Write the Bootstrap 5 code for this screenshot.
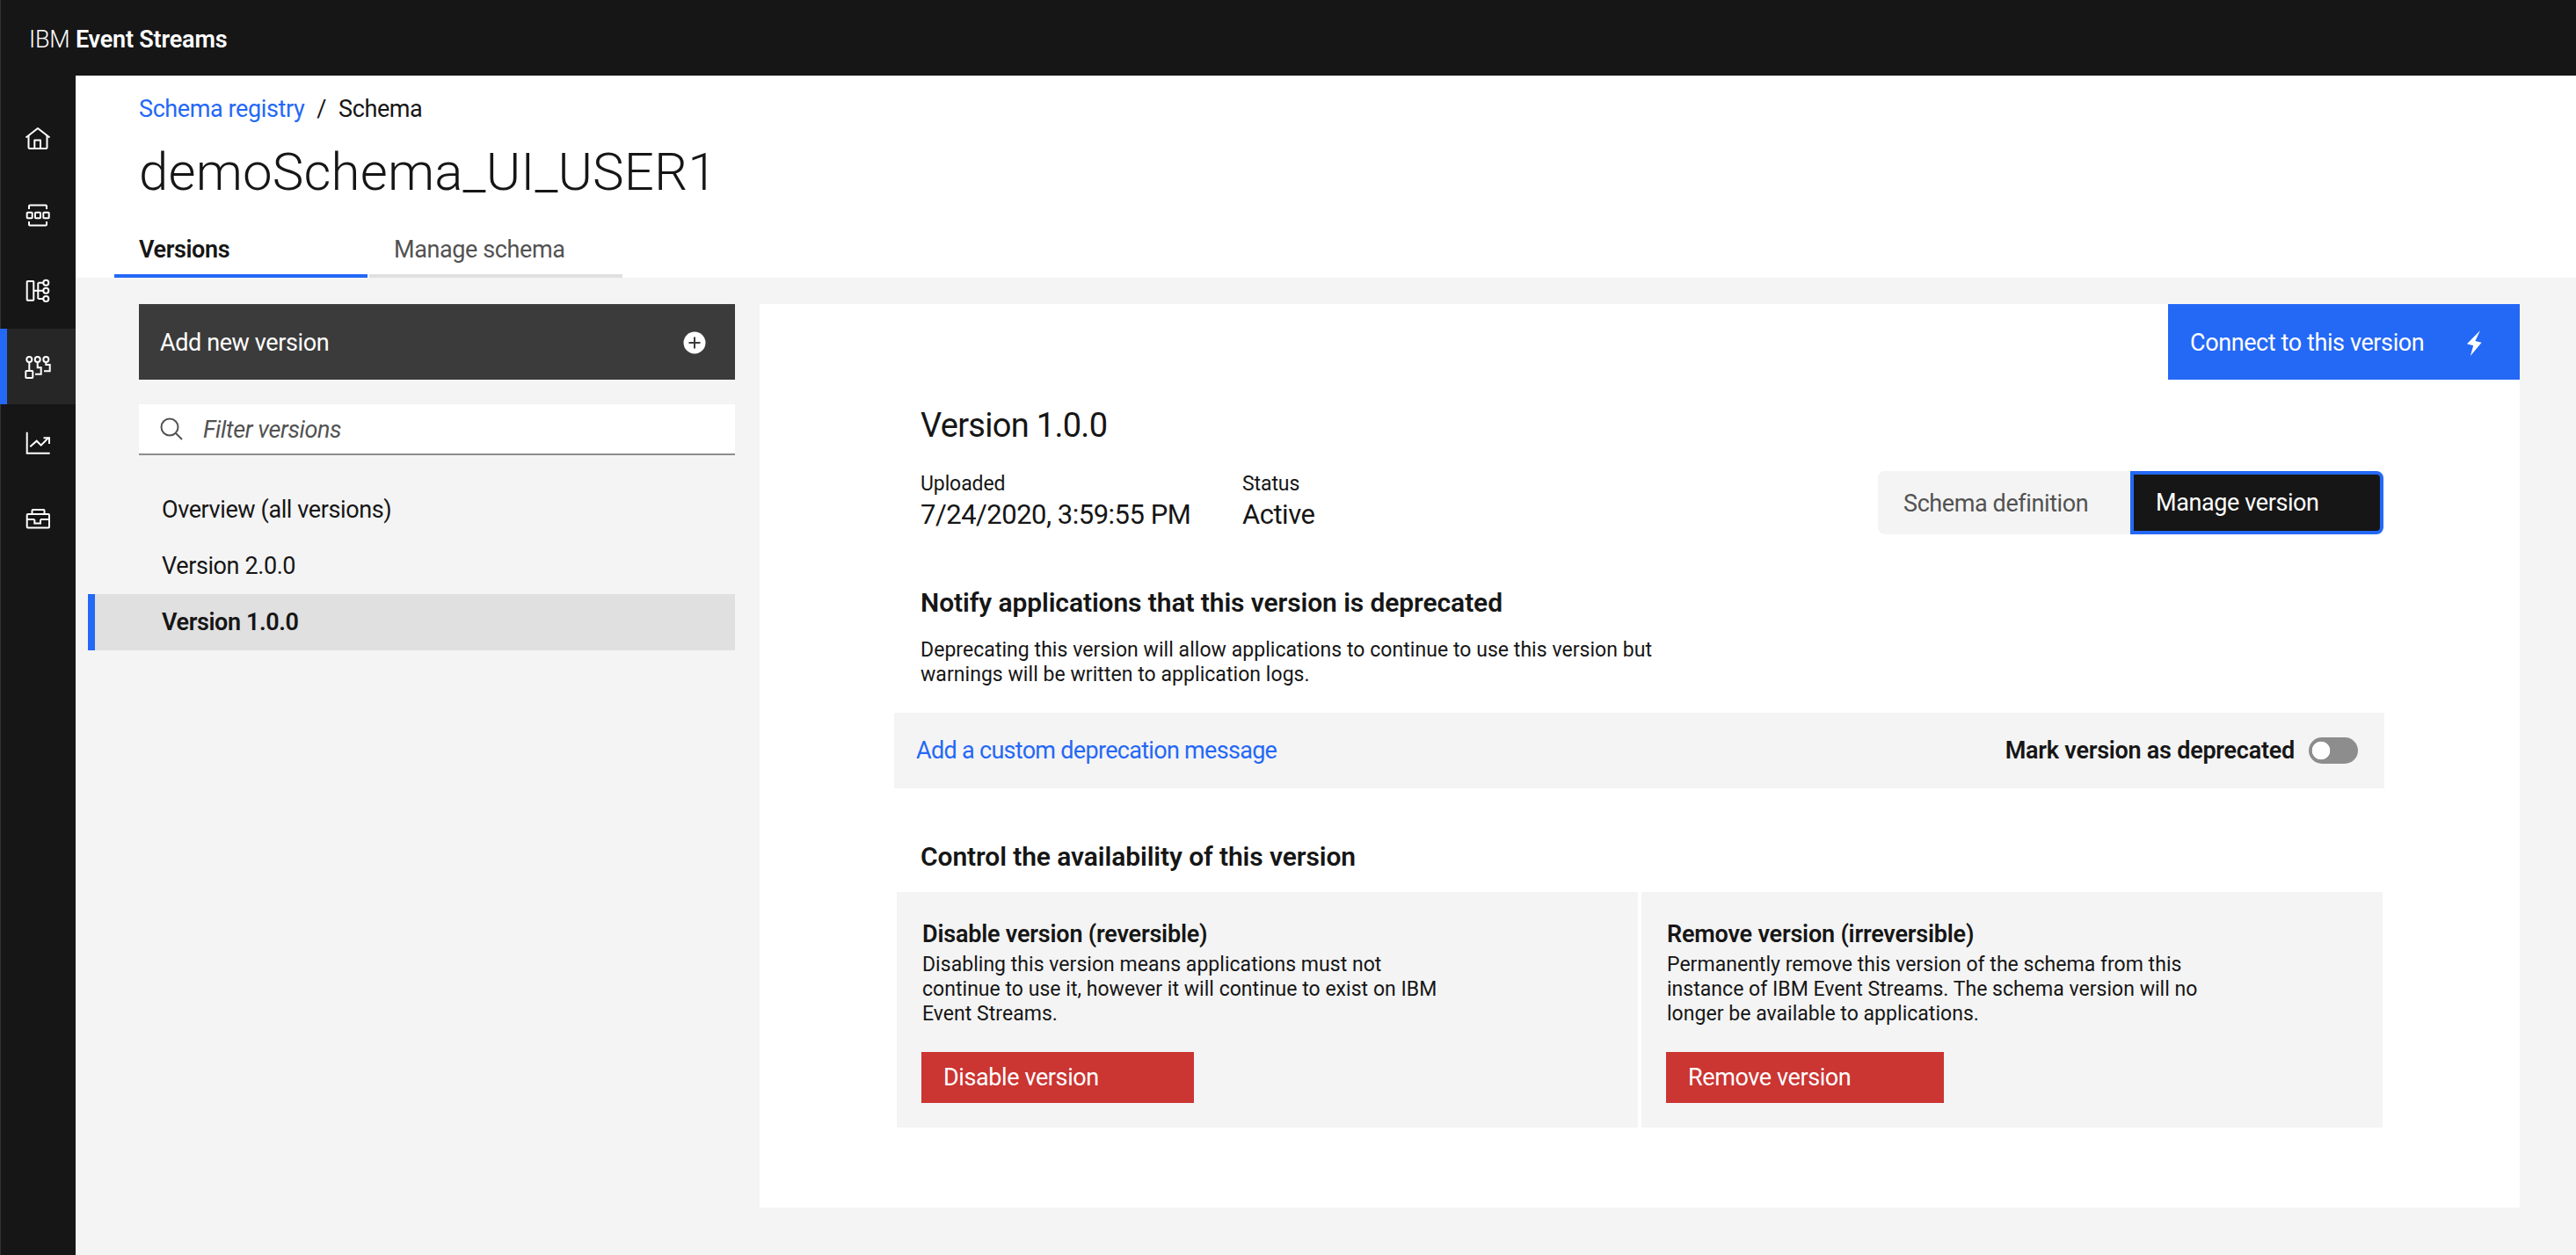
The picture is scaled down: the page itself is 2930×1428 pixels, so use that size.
<!DOCTYPE html>
<html lang="en">
<head>
<meta charset="utf-8">
<title>Schema</title>
<link href="https://cdn.jsdelivr.net/npm/bootstrap@5.3.0/dist/css/bootstrap.min.css" rel="stylesheet">
<style>
html,body{height:100%}
body{font-family:Roboto,"Liberation Sans",sans-serif;font-size:27px;line-height:36px;letter-spacing:-.4px;color:#161616;background:#f4f4f4;overflow:hidden}
.es-top{height:86px;padding:4px 0 0 33px;background:#161616;align-items:center;justify-content:flex-start;border-left:1px solid #333}
.es-brand{color:#fff;font-size:27px;line-height:36px;letter-spacing:-.2px;padding:0;margin:0;margin-left:-1px;font-weight:300}
.es-brand b{font-weight:600}
.es-shell{height:1342px}
.es-rail{width:86px;flex:none;background:#161616;padding-top:30px;border-left:1px solid #333}
.es-rail .nav-link{height:86px;padding:0;margin-left:-1px;display:flex;align-items:center;justify-content:center;border-left:0}
.es-rail .nav-link.active{background:#262626;box-shadow:inset 8px 0 0 #2468f6}
.es-rail svg{width:32px;height:32px;fill:none;stroke:#fff;stroke-width:2}
.es-main{min-width:0}
.es-head{height:230px;background:#fff;padding:20px 0 0 72px;position:relative}
.es-crumb{margin:0;--bs-breadcrumb-divider-color:#161616;--bs-breadcrumb-item-padding-x:14px;--bs-breadcrumb-margin-bottom:0}
.es-crumb a{color:#2468f6;text-decoration:none}
.es-crumb .breadcrumb-item.active{color:#161616}
.es-crumb .breadcrumb-item+.breadcrumb-item::before{color:#161616}
.es-title{font-size:60px;line-height:72px;font-weight:300;letter-spacing:.15px;margin:18px 0 0}
.es-tabs{margin:20px 0 0 -28px;border:0;gap:2px;flex-wrap:nowrap}
.es-tabs .nav-link{width:288px;height:64px;padding:14px 0 10px 28px;border:0;border-bottom:4px solid #e0e0e0;border-radius:0;margin:0;color:#525252;background:none}
.es-tabs .nav-link.active{color:#161616;font-weight:600;border-bottom-color:#2468f6;background:none}
.es-body{padding:30px 64px 0 72px;gap:28px}
.es-left{width:678px;flex:none}
.es-add{height:86px;width:100%;background:#3b3b3b;color:#fff;border:0;border-radius:0;padding:2px 33px 0 24px;font-size:27px;line-height:36px;letter-spacing:-.4px;display:flex;align-items:center;justify-content:space-between}
.es-add svg{width:26px;height:26px}
.es-search{height:58px;margin-top:28px;background:#fff;border-bottom:2px solid #8d8d8d;align-items:center;padding-left:24px}
.es-search svg{width:26px;height:26px;flex:none;fill:none;stroke:#525252;stroke-width:2}
.es-search input{border:0;border-radius:0;padding:2px 0 0;margin-left:23px;background:none;font-size:27px;line-height:36px;letter-spacing:-.4px;font-style:italic;box-shadow:none}
.es-search input::placeholder{color:#525252;opacity:1}
.es-vlist{margin:30px 0 0 -58px;--bs-list-group-bg:transparent;--bs-list-group-border-width:0;border-radius:0}
.es-vlist .list-group-item{height:64px;padding:14px 0 0 84px;background:none;color:#161616;border:0;border-radius:0}
.es-vlist .list-group-item.active{background:#e0e0e0;color:#161616;font-weight:600;padding-left:76px;border-left:8px solid #2468f6;margin:0}
.es-panel{width:2002px;height:1028px;flex:none;background:#fff;padding:0 154px 0 153px;position:relative}
.es-connectrow{margin-right:-154px}
.es-connect{width:400px;height:86px;background:#2468f6;color:#fff;border:0;border-radius:0;padding:2px 43px 0 25px;font-size:27px;line-height:36px;letter-spacing:-.4px;display:flex;align-items:center;justify-content:space-between}
.es-connect svg{width:17px;height:29px;fill:#fff;flex:none}
.es-inset{padding-left:30px}
.es-ver{font-size:38px;line-height:48px;font-weight:400;margin:28px 0 0;letter-spacing:-.7px}
.es-meta{margin-top:27px;height:73px}
.es-lbl{font-size:23px;line-height:32px;letter-spacing:-.1px}
.es-val{font-size:31px;line-height:40px;letter-spacing:-.5px;margin-top:-1px}
.es-col1{width:366px}
.es-seg{width:576px;height:72px;margin-top:1px;flex:none;border-radius:8px}
.es-seg .btn{width:288px;height:72px;flex:none;padding:2px 0 0 29px;text-align:left;font-size:27px;line-height:36px;letter-spacing:-.4px;background:#f4f4f4;color:#525252;border:0;border-radius:8px 0 0 8px}
.es-seg .btn.active{background:#161616;color:#fff;border:4px solid #2468f6;border-radius:0 8px 8px 0;padding:0 0 0 25px;margin:0}
.es-h{font-size:30px;line-height:40px;font-weight:600;letter-spacing:-.1px;margin:0}
.es-hn{margin-top:58px}
.es-pp{font-size:23px;line-height:28px;letter-spacing:.05px;margin:20px 0 0}
.es-bar{height:86px;margin-top:29px;background:#f4f4f4;padding:0 30px 0 25px;align-items:center;justify-content:space-between}
.es-bar a{color:#2468f6;text-decoration:none;letter-spacing:-.7px}
.es-sw{padding:0;margin:0;min-height:0;gap:16px;align-items:center}
.es-sw .form-check-label{font-weight:600;letter-spacing:-.25px}
.es-sw .form-check-input{width:56px;height:30px;margin:0;float:none;border:0;border-radius:15px;background-color:#8d8d8d;background-image:radial-gradient(circle at 14px 15px,#fff 10px,transparent 10.6px);background-position:0 0;background-size:auto}
.es-hc{margin-top:58px}
.es-cards{margin:20px 2px 0 3px;gap:4px}
.es-card{flex:1 1 0;height:268px;background:#f4f4f4;border:0;border-radius:0;padding:30px 28px 28px}
.es-card h3{font-size:27px;line-height:36px;font-weight:600;letter-spacing:-.2px;margin:0 0 0 1px}
.es-card p{font-size:23px;line-height:28px;letter-spacing:.03px;margin:3px 0 0 1px}
.es-danger{height:58px;background:#cb3532;color:#fff;border:0;border-radius:0;text-align:left;padding:0 0 0 25px;font-size:27px;line-height:36px;letter-spacing:-.4px;margin-top:29px}
.es-w1{width:310px}
.es-w2{width:316px}
</style>
</head>
<body>
<nav class="navbar es-top"><span class="navbar-brand es-brand">IBM <b>Event Streams</b></span></nav>
<div class="d-flex es-shell">
  <aside class="nav flex-column flex-nowrap es-rail">
    <a class="nav-link" href="#" aria-label="Home"><svg viewBox="0 0 32 32" stroke-linejoin="round"><path d="M2.5 13.5 16 3l13.500 10.500"/><path d="M5.500 11v13.500q0 1.500 1.500 1.500h18q1.500 0 1.500-1.500V11"/><path d="M12.300 26V16.500h6.700V26"/></svg></a>
    <a class="nav-link" href="#" aria-label="Topics"><svg viewBox="0 0 32 32"><path d="M6 9V5.500q0-1 1-1h18q1 0 1 1V9M6 23v3.500q0 1 1 1h18q1 0 1-1V23"/><rect x="3.700" y="12.700" width="6" height="6.600" rx=".8"/><rect x="13" y="12.700" width="6" height="6.600" rx=".8"/><rect x="22.300" y="12.700" width="6.400" height="6.600" rx=".8"/></svg></a>
    <a class="nav-link" href="#" aria-label="Consumer groups"><svg viewBox="0 0 32 32"><rect x="3.700" y="5" width="7.600" height="21.700" rx=".6"/><circle cx="25.300" cy="6.700" r="3"/><circle cx="25.300" cy="15.700" r="3"/><circle cx="25.300" cy="25" r="3"/><path d="M11.300 15.700h11M16.300 6.700V25M16.300 6.700h6M16.300 25h6"/></svg></a>
    <a class="nav-link active" href="#" aria-label="Schema registry"><svg viewBox="0 0 32 32"><circle cx="6.300" cy="8" r="3"/><circle cx="15.700" cy="8" r="3"/><circle cx="25.300" cy="8" r="3"/><rect x="2.300" y="21" width="8" height="8" rx=".8"/><path d="M6.300 11v10M15.700 11v6.300h4v7.400H13M25.300 11v3h4.400v7.300H23"/></svg></a>
    <a class="nav-link" href="#" aria-label="Monitoring"><svg viewBox="0 0 32 32"><path d="M3.700 4.700v24h26"/><path d="M7.300 21.300l7.400-6.600 5 5L28 11.300"/><path d="M22.500 11.300H29V18"/></svg></a>
    <a class="nav-link" href="#" aria-label="Toolbox"><svg viewBox="0 0 32 32"><rect x="3.700" y="12" width="25.300" height="15.500" rx="1"/><path d="M9.500 12V8q0-1 1-1h12q1 0 1 1v4M3.700 18H12.300M19 18h10M12.300 18v4.500H19V18"/></svg></a>
  </aside>
  <main class="flex-grow-1 es-main">
    <header class="es-head">
      <nav aria-label="breadcrumb"><ol class="breadcrumb es-crumb"><li class="breadcrumb-item"><a href="#">Schema registry</a></li><li class="breadcrumb-item active" aria-current="page">Schema</li></ol></nav>
      <h1 class="es-title">demoSchema_UI_USER1</h1>
      <ul class="nav nav-tabs es-tabs">
        <li class="nav-item"><a class="nav-link active" href="#">Versions</a></li>
        <li class="nav-item"><a class="nav-link" href="#">Manage schema</a></li>
      </ul>
    </header>
    <div class="d-flex es-body">
      <section class="es-left">
        <button class="btn es-add" type="button"><span>Add new version</span><svg viewBox="0 0 26 26"><circle cx="13" cy="13" r="12.500" fill="#fff"/><path d="M13 6.500v13M6.500 13h13" stroke="#3b3b3b" stroke-width="2" fill="none"/></svg></button>
        <div class="d-flex es-search"><svg viewBox="0 0 26 26"><circle cx="11" cy="11" r="9.500"/><path d="M18 18l7 7"/></svg><input class="form-control" type="text" placeholder="Filter versions" aria-label="Filter versions"></div>
        <div class="list-group es-vlist">
          <a class="list-group-item" href="#">Overview (all versions)</a>
          <a class="list-group-item" href="#">Version 2.0.0</a>
          <a class="list-group-item active" href="#">Version 1.0.0</a>
        </div>
      </section>
      <section class="es-panel">
        <div class="d-flex justify-content-end es-connectrow"><button class="btn es-connect" type="button"><span>Connect to this version</span><svg viewBox="0 0 17 29"><path d="M15 0 0 15.300l7.200 2L3.900 29 16.600 13.700 9.400 12z"/></svg></button></div>
        <div class="es-inset">
          <h2 class="es-ver">Version 1.0.0</h2>
          <div class="d-flex justify-content-between es-meta">
            <div class="d-flex">
              <div class="es-col1"><div class="es-lbl">Uploaded</div><div class="es-val">7/24/2020, 3:59:55 PM</div></div>
              <div><div class="es-lbl">Status</div><div class="es-val">Active</div></div>
            </div>
            <div class="btn-group es-seg" role="group"><button class="btn" type="button">Schema definition</button><button class="btn active" type="button">Manage version</button></div>
          </div>
          <h3 class="es-h es-hn">Notify applications that this version is deprecated</h3>
          <p class="es-pp">Deprecating this version will allow applications to continue to use this version but<br>warnings will be written to application logs.</p>
        </div>
        <div class="d-flex es-bar">
          <a href="#">Add a custom deprecation message</a>
          <div class="form-check form-switch d-flex es-sw"><label class="form-check-label" for="dep">Mark version as deprecated</label><input class="form-check-input" type="checkbox" role="switch" id="dep"></div>
        </div>
        <div class="es-inset"><h3 class="es-h es-hc">Control the availability of this version</h3></div>
        <div class="d-flex es-cards">
          <div class="card es-card">
            <h3>Disable version (reversible)</h3>
            <p>Disabling this version means applications must not<br>continue to use it, however it will continue to exist on IBM<br>Event Streams.</p>
            <button class="btn es-danger es-w1" type="button">Disable version</button>
          </div>
          <div class="card es-card">
            <h3>Remove version (irreversible)</h3>
            <p>Permanently remove this version of the schema from this<br>instance of IBM Event Streams. The schema version will no<br>longer be available to applications.</p>
            <button class="btn es-danger es-w2" type="button">Remove version</button>
          </div>
        </div>
      </section>
    </div>
  </main>
</div>
<script src="https://cdn.jsdelivr.net/npm/bootstrap@5.3.0/dist/js/bootstrap.bundle.min.js"></script>
</body>
</html>
